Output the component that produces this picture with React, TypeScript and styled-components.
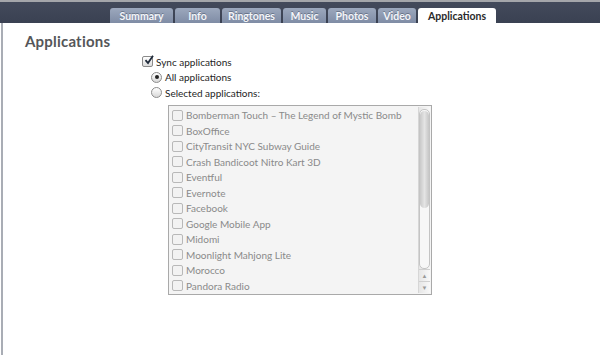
import styled, { createGlobalStyle } from 'styled-components';

const GlobalStyle = createGlobalStyle`
  html, body {
    margin: 0;
    padding: 0;
    background: #ffffff;
  }
`;

const Window = styled.div`
  width: 600px;
  height: 355px;
  display: flex;
  flex-direction: column;
  overflow: hidden;
  font-family: 'Lucida Grande', Lato, 'Noto Sans', sans-serif;
  background: #ffffff;
`;

const TopBar = styled.div`
  height: 21px;
  border-top: 2px solid #a4a6aa;
  background: linear-gradient(#434a5b, #3a4152);
  display: flex;
  align-items: flex-end;
  padding-left: 110px;
  gap: 2px;
`;

const Tab = styled.div<{ $active?: boolean; $w: number }>`
  width: ${(p) => p.$w}px;
  height: 15px;
  border-radius: 3px 3px 0 0;
  display: flex;
  align-items: center;
  justify-content: center;
  font-size: 10.5px;
  font-weight: bold;
  color: ${(p) => (p.$active ? '#2a2a2a' : '#f4f6fa')};
  background: ${(p) =>
    p.$active ? '#ffffff' : 'linear-gradient(#9ca8bd, #7f8ca5)'};
  text-shadow: ${(p) => (p.$active ? 'none' : '0 -1px 0 rgba(40,50,70,0.4)')};
`;

const Body = styled.div`
  flex: 1;
  border-left: 2px solid #a9adb5;
  margin-left: 1px;
  padding: 9px 0 0 22px;
`;

const Heading = styled.h2`
  margin: 0;
  font-size: 15px;
  line-height: 18px;
  font-weight: bold;
  color: #555659;
  letter-spacing: 0.2px;
`;

const Options = styled.div`
  margin-left: 117px;
  margin-top: 4px;
  display: flex;
  flex-direction: column;
`;

const OptionRow = styled.div<{ $indent?: number }>`
  height: 15.5px;
  display: flex;
  align-items: center;
  gap: 3px;
  padding-left: ${(p) => p.$indent ?? 0}px;
  font-size: 10px;
  color: #1e1e1e;
`;

const CheckBox = styled.span<{ $checked?: boolean; $dim?: boolean }>`
  width: 9px;
  height: 9px;
  flex: none;
  border: 1px solid ${(p) => (p.$dim ? '#b8b8b8' : '#8a8a8a')};
  border-radius: 2px;
  background: ${(p) => (p.$dim ? '#f2f2f2' : 'linear-gradient(#ffffff, #dcdcdc)')};
  display: flex;
  align-items: center;
  justify-content: center;
`;

const Radio = styled.span<{ $on?: boolean }>`
  width: 9px;
  height: 9px;
  flex: none;
  border: 1px solid #8c8c8c;
  border-radius: 50%;
  background: linear-gradient(#ffffff, #d8d8d8);
  display: flex;
  align-items: center;
  justify-content: center;
  &::after {
    content: '';
    width: 4px;
    height: 4px;
    border-radius: 50%;
    background: ${(p) => (p.$on ? '#222' : 'transparent')};
  }
`;

const ListBox = styled.div`
  margin-left: 26px;
  margin-top: 4px;
  width: 262px;
  height: 188px;
  border: 1px solid #a9a9a9;
  background: #f4f4f4;
  display: flex;
`;

const Items = styled.div`
  flex: 1;
  padding: 2px 0 0 3px;
  display: flex;
  flex-direction: column;
`;

const Item = styled.div`
  height: 15.6px;
  display: flex;
  align-items: center;
  gap: 3px;
  font-size: 10px;
  color: #8a8a8a;
  white-space: nowrap;
`;

const ScrollBar = styled.div`
  width: 11px;
  margin: 1px 1px 1px 0;
  border-left: 1px solid #d6d6d6;
  background: linear-gradient(90deg, #e6e6e6, #f8f8f8);
  display: flex;
  flex-direction: column;
  align-items: center;
`;

const Track = styled.div`
  flex: 1;
  width: 9px;
  margin-top: 2px;
  border: 1px solid #c4c4c4;
  border-radius: 5px;
  background: #f7f7f7;
  display: flex;
  flex-direction: column;
`;

const Thumb = styled.div`
  height: 97px;
  margin-top: 1px;
  border-radius: 5px;
  background: linear-gradient(90deg, #c9c9c9, #e4e4e4 50%, #c6c6c6);
`;

const Arrow = styled.div`
  width: 11px;
  height: 11px;
  border-top: 1px solid #d0d0d0;
  display: flex;
  align-items: center;
  justify-content: center;
  font-size: 6px;
  color: #9a9a9a;
`;

const tabs = [
  { label: 'Summary', w: 63 },
  { label: 'Info', w: 45 },
  { label: 'Ringtones', w: 59 },
  { label: 'Music', w: 43 },
  { label: 'Photos', w: 48 },
  { label: 'Video', w: 38 },
  { label: 'Applications', w: 78, active: true },
];

const apps = [
  'Bomberman Touch – The Legend of Mystic Bomb',
  'BoxOffice',
  'CityTransit NYC Subway Guide',
  'Crash Bandicoot Nitro Kart 3D',
  'Eventful',
  'Evernote',
  'Facebook',
  'Google Mobile App',
  'Midomi',
  'Moonlight Mahjong Lite',
  'Morocco',
  'Pandora Radio',
];

const Tick = () => (
  <svg width="10" height="10" viewBox="0 0 10 10" style={{ marginTop: -3, marginRight: -3 }}>
    <path d="M1.5 5.2 L4 8 L9 0.8" fill="none" stroke="#1f2a3a" strokeWidth="1.8" />
  </svg>
);

export default function App() {
  return (
    <Window>
      <GlobalStyle />
      <TopBar>
        {tabs.map((t) => (
          <Tab key={t.label} $w={t.w} $active={t.active}>
            {t.label}
          </Tab>
        ))}
      </TopBar>
      <Body>
        <Heading>Applications</Heading>
        <Options>
          <OptionRow>
            <CheckBox $checked>
              <Tick />
            </CheckBox>
            Sync applications
          </OptionRow>
          <OptionRow $indent={9}>
            <Radio $on />
            All applications
          </OptionRow>
          <OptionRow $indent={9}>
            <Radio />
            Selected applications:
          </OptionRow>
          <ListBox>
            <Items>
              {apps.map((a) => (
                <Item key={a}>
                  <CheckBox $dim />
                  {a}
                </Item>
              ))}
            </Items>
            <ScrollBar>
              <Track>
                <Thumb />
              </Track>
              <Arrow>▲</Arrow>
              <Arrow>▼</Arrow>
            </ScrollBar>
          </ListBox>
        </Options>
      </Body>
    </Window>
  );
}
